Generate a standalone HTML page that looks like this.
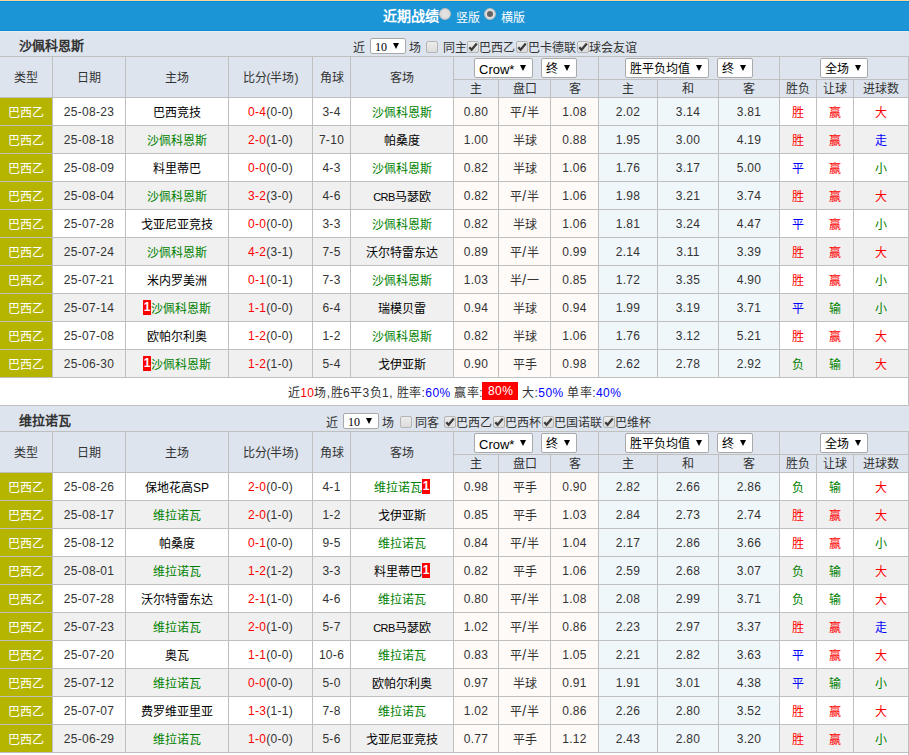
<!DOCTYPE html>
<html lang="zh-CN"><head><meta charset="utf-8"><style>
html,body{margin:0;padding:0}
body{width:909px;height:755px;overflow:hidden;position:relative;background:#fff;font-family:"Liberation Sans",sans-serif;font-size:12px;color:#333}
.a{position:absolute}
.sl{font-size:14px;margin:0 0.5px 0 0;position:relative;top:0}
.t{position:absolute;text-align:center;white-space:nowrap;overflow:visible}
.s{position:absolute;white-space:nowrap}
.bd{display:inline-block;background:#f00;color:#fff;font-weight:bold;width:8px;height:15px;line-height:15px;font-size:12px;text-align:center;vertical-align:middle;position:relative;top:-2px}
.cb{position:absolute;width:10px;height:10px;border:1px solid #b4b4b4;border-radius:2px;background:linear-gradient(#ececec,#dcdcdc)}
.cb svg{position:absolute;left:-1px;top:-1px}
.sel{position:absolute;height:20px;border:1px solid #a9a9a9;border-radius:2px;background:#fff;box-sizing:border-box;white-space:nowrap;color:#000;font-size:13px;line-height:19px}
.sel span{position:absolute;left:4px;top:1px;font-size:12px}
.sel i{position:absolute;right:6px;top:6px;width:0;height:0;border-left:3px solid transparent;border-right:3px solid transparent;border-top:6px solid #000}
.sel10{position:absolute;width:36px;height:16px;border:1px solid #a9a9a9;border-radius:2px;background:#fff;box-sizing:border-box;white-space:nowrap;color:#000}
.sel10 span{position:absolute;left:4px;top:1px;font-family:"Liberation Serif",serif;font-size:12px;line-height:15px}
.sel10 i{position:absolute;right:6px;top:4px;width:0;height:0;border-left:3px solid transparent;border-right:3px solid transparent;border-top:6px solid #000}
.red80{display:inline-block;background:#f00;color:#fff;padding:0 5px 0 6px;line-height:18px;height:18px;margin-left:-1px;position:relative;top:-2px}
.rad{position:absolute;width:10px;height:10px;border-radius:50%;border:1px solid #bdbdbd;background:radial-gradient(#e6e6e6,#d6d6d6)}
.rad.on::after{content:"";position:absolute;left:2px;top:2px;width:6px;height:6px;border-radius:50%;background:#646464}
</style></head><body>
<div class="a" style="left:0;top:0;width:909px;height:1px;background:#ffd699"></div>
<div class="a" style="left:0;top:1px;width:909px;height:29px;background:#1b95d6"></div>
<div class="a" style="left:0;top:1px;width:909px;height:1px;background:#0a8ed6"></div>
<div class="a" style="left:0px;top:31px;width:909px;height:25px;background:#dde4ee"></div>
<div class="a" style="left:0px;top:30px;width:909px;height:1px;background:#0a8dd5"></div>
<div class="a" style="left:0px;top:31px;width:909px;height:1px;background:#e8ebf0"></div>
<div class="s" style="left:19px;top:36px;font-weight:bold;font-size:13px;color:#333;line-height:20px">沙佩科恩斯</div>
<div class="s" style="left:353px;top:40px;line-height:16px">近</div>
<div class="sel10" style="left:370px;top:38px"><span>10</span><i></i></div>
<div class="s" style="left:409px;top:40px;line-height:16px">场</div>
<div class="cb" style="left:426px;top:41px"></div>
<div class="s" style="left:442.5px;top:40px;line-height:16px">同主</div>
<div class="cb" style="left:467px;top:41px"><svg width="12" height="12" viewBox="0 0 12 12"><path d="M2.3 6.2 L4.6 8.8 L9.8 2.6" stroke="#3c3c3c" stroke-width="2.3" fill="none"/></svg></div>
<div class="s" style="left:478.5px;top:40px;line-height:16px">巴西乙</div>
<div class="cb" style="left:516.0px;top:41px"><svg width="12" height="12" viewBox="0 0 12 12"><path d="M2.3 6.2 L4.6 8.8 L9.8 2.6" stroke="#3c3c3c" stroke-width="2.3" fill="none"/></svg></div>
<div class="s" style="left:527.5px;top:40px;line-height:16px">巴卡德联</div>
<div class="cb" style="left:577.0px;top:41px"><svg width="12" height="12" viewBox="0 0 12 12"><path d="M2.3 6.2 L4.6 8.8 L9.8 2.6" stroke="#3c3c3c" stroke-width="2.3" fill="none"/></svg></div>
<div class="s" style="left:588.5px;top:40px;line-height:16px">球会友谊</div>
<div class="a" style="left:0px;top:57px;width:909px;height:40px;background:#dde4ee"></div>
<div class="t" style="left:0px;top:58px;width:52px;height:40px;line-height:40px;color:#333">类型</div>
<div class="t" style="left:53px;top:58px;width:72px;height:40px;line-height:40px;color:#333">日期</div>
<div class="t" style="left:126px;top:58px;width:102px;height:40px;line-height:40px;color:#333">主场</div>
<div class="t" style="left:229px;top:58px;width:83px;height:40px;line-height:40px;color:#333">比分(半场)</div>
<div class="t" style="left:313px;top:58px;width:37px;height:40px;line-height:40px;color:#333">角球</div>
<div class="t" style="left:351px;top:58px;width:102px;height:40px;line-height:40px;color:#333">客场</div>
<div class="sel" style="left:474px;top:58px;width:59px;"><span><span style="font-size:13px;position:static">Crow*</span></span><i></i></div>
<div class="sel" style="left:541px;top:58px;width:36px;"><span>终</span><i></i></div>
<div class="sel" style="left:625px;top:58px;width:84px;"><span>胜平负均值</span><i></i></div>
<div class="sel" style="left:717px;top:58px;width:36px;"><span>终</span><i></i></div>
<div class="sel" style="left:820px;top:58px;width:48px;"><span>全场</span><i></i></div>
<div class="t" style="left:454px;top:81px;width:44px;height:17px;line-height:17px;color:#333">主</div>
<div class="t" style="left:499px;top:81px;width:51px;height:17px;line-height:17px;color:#333">盘口</div>
<div class="t" style="left:551px;top:81px;width:47px;height:17px;line-height:17px;color:#333">客</div>
<div class="t" style="left:599px;top:81px;width:58px;height:17px;line-height:17px;color:#333">主</div>
<div class="t" style="left:658px;top:81px;width:60px;height:17px;line-height:17px;color:#333">和</div>
<div class="t" style="left:719px;top:81px;width:60px;height:17px;line-height:17px;color:#333">客</div>
<div class="t" style="left:780px;top:81px;width:36px;height:17px;line-height:17px;color:#333">胜负</div>
<div class="t" style="left:817px;top:81px;width:36px;height:17px;line-height:17px;color:#333">让球</div>
<div class="t" style="left:854px;top:81px;width:54px;height:17px;line-height:17px;color:#333">进球数</div>
<div class="a" style="left:0px;top:98px;width:909px;height:27px;background:#fff"></div>
<div class="a" style="left:0px;top:98px;width:52px;height:27px;background:#b5b500"></div>
<div class="a" style="left:454px;top:98px;width:44px;height:27px;background:#fefaf7"></div>
<div class="a" style="left:499px;top:98px;width:51px;height:27px;background:#fefaf7"></div>
<div class="a" style="left:551px;top:98px;width:47px;height:27px;background:#fefaf7"></div>
<div class="a" style="left:599px;top:98px;width:58px;height:27px;background:#f0f7fb"></div>
<div class="a" style="left:658px;top:98px;width:60px;height:27px;background:#f0f7fb"></div>
<div class="a" style="left:719px;top:98px;width:60px;height:27px;background:#f0f7fb"></div>
<div class="t" style="left:0px;top:100px;width:52px;height:27px;line-height:27px;color:#fff">巴西乙</div>
<div class="t" style="left:53px;top:99px;width:72px;height:27px;line-height:27px;color:#333;letter-spacing:.3px">25-08-23</div>
<div class="t" style="left:126px;top:100px;width:102px;height:27px;line-height:27px;"><span style="color:#000">巴西竞技</span></div>
<div class="t" style="left:229px;top:99px;width:83px;height:27px;line-height:27px;color:#333;letter-spacing:.3px"><span style="color:#ff0000">0-4</span>(0-0)</div>
<div class="t" style="left:313px;top:99px;width:37px;height:27px;line-height:27px;color:#333;letter-spacing:.3px">3-4</div>
<div class="t" style="left:351px;top:100px;width:102px;height:27px;line-height:27px;"><span style="color:#008000">沙佩科恩斯</span></div>
<div class="t" style="left:454px;top:99px;width:44px;height:27px;line-height:27px;color:#333;letter-spacing:.3px">0.80</div>
<div class="t" style="left:499px;top:99px;width:51px;height:27px;line-height:27px;color:#333">平<span class="sl">/</span>半</div>
<div class="t" style="left:551px;top:99px;width:47px;height:27px;line-height:27px;color:#333;letter-spacing:.3px">1.08</div>
<div class="t" style="left:599px;top:99px;width:58px;height:27px;line-height:27px;color:#333;letter-spacing:.3px">2.02</div>
<div class="t" style="left:658px;top:99px;width:60px;height:27px;line-height:27px;color:#333;letter-spacing:.3px">3.14</div>
<div class="t" style="left:719px;top:99px;width:60px;height:27px;line-height:27px;color:#333;letter-spacing:.3px">3.81</div>
<div class="t" style="left:780px;top:100px;width:36px;height:27px;line-height:27px;color:#ff0000">胜</div>
<div class="t" style="left:817px;top:100px;width:36px;height:27px;line-height:27px;color:#ff0000">赢</div>
<div class="t" style="left:854px;top:100px;width:54px;height:27px;line-height:27px;color:#ff0000">大</div>
<div class="a" style="left:0px;top:126px;width:909px;height:27px;background:#f0f0f0"></div>
<div class="a" style="left:0px;top:126px;width:52px;height:27px;background:#b5b500"></div>
<div class="a" style="left:454px;top:126px;width:44px;height:27px;background:#fefaf7"></div>
<div class="a" style="left:499px;top:126px;width:51px;height:27px;background:#fefaf7"></div>
<div class="a" style="left:551px;top:126px;width:47px;height:27px;background:#fefaf7"></div>
<div class="a" style="left:599px;top:126px;width:58px;height:27px;background:#f0f7fb"></div>
<div class="a" style="left:658px;top:126px;width:60px;height:27px;background:#f0f7fb"></div>
<div class="a" style="left:719px;top:126px;width:60px;height:27px;background:#f0f7fb"></div>
<div class="t" style="left:0px;top:128px;width:52px;height:27px;line-height:27px;color:#fff">巴西乙</div>
<div class="t" style="left:53px;top:127px;width:72px;height:27px;line-height:27px;color:#333;letter-spacing:.3px">25-08-18</div>
<div class="t" style="left:126px;top:128px;width:102px;height:27px;line-height:27px;"><span style="color:#008000">沙佩科恩斯</span></div>
<div class="t" style="left:229px;top:127px;width:83px;height:27px;line-height:27px;color:#333;letter-spacing:.3px"><span style="color:#ff0000">2-0</span>(1-0)</div>
<div class="t" style="left:313px;top:127px;width:37px;height:27px;line-height:27px;color:#333;letter-spacing:.3px">7-10</div>
<div class="t" style="left:351px;top:128px;width:102px;height:27px;line-height:27px;"><span style="color:#000">帕桑度</span></div>
<div class="t" style="left:454px;top:127px;width:44px;height:27px;line-height:27px;color:#333;letter-spacing:.3px">1.00</div>
<div class="t" style="left:499px;top:128px;width:51px;height:27px;line-height:27px;color:#333">半球</div>
<div class="t" style="left:551px;top:127px;width:47px;height:27px;line-height:27px;color:#333;letter-spacing:.3px">0.88</div>
<div class="t" style="left:599px;top:127px;width:58px;height:27px;line-height:27px;color:#333;letter-spacing:.3px">1.95</div>
<div class="t" style="left:658px;top:127px;width:60px;height:27px;line-height:27px;color:#333;letter-spacing:.3px">3.00</div>
<div class="t" style="left:719px;top:127px;width:60px;height:27px;line-height:27px;color:#333;letter-spacing:.3px">4.19</div>
<div class="t" style="left:780px;top:128px;width:36px;height:27px;line-height:27px;color:#ff0000">胜</div>
<div class="t" style="left:817px;top:128px;width:36px;height:27px;line-height:27px;color:#ff0000">赢</div>
<div class="t" style="left:854px;top:128px;width:54px;height:27px;line-height:27px;color:#0000ff">走</div>
<div class="a" style="left:0px;top:154px;width:909px;height:27px;background:#fff"></div>
<div class="a" style="left:0px;top:154px;width:52px;height:27px;background:#b5b500"></div>
<div class="a" style="left:454px;top:154px;width:44px;height:27px;background:#fefaf7"></div>
<div class="a" style="left:499px;top:154px;width:51px;height:27px;background:#fefaf7"></div>
<div class="a" style="left:551px;top:154px;width:47px;height:27px;background:#fefaf7"></div>
<div class="a" style="left:599px;top:154px;width:58px;height:27px;background:#f0f7fb"></div>
<div class="a" style="left:658px;top:154px;width:60px;height:27px;background:#f0f7fb"></div>
<div class="a" style="left:719px;top:154px;width:60px;height:27px;background:#f0f7fb"></div>
<div class="t" style="left:0px;top:156px;width:52px;height:27px;line-height:27px;color:#fff">巴西乙</div>
<div class="t" style="left:53px;top:155px;width:72px;height:27px;line-height:27px;color:#333;letter-spacing:.3px">25-08-09</div>
<div class="t" style="left:126px;top:156px;width:102px;height:27px;line-height:27px;"><span style="color:#000">料里蒂巴</span></div>
<div class="t" style="left:229px;top:155px;width:83px;height:27px;line-height:27px;color:#333;letter-spacing:.3px"><span style="color:#ff0000">0-0</span>(0-0)</div>
<div class="t" style="left:313px;top:155px;width:37px;height:27px;line-height:27px;color:#333;letter-spacing:.3px">4-3</div>
<div class="t" style="left:351px;top:156px;width:102px;height:27px;line-height:27px;"><span style="color:#008000">沙佩科恩斯</span></div>
<div class="t" style="left:454px;top:155px;width:44px;height:27px;line-height:27px;color:#333;letter-spacing:.3px">0.82</div>
<div class="t" style="left:499px;top:156px;width:51px;height:27px;line-height:27px;color:#333">半球</div>
<div class="t" style="left:551px;top:155px;width:47px;height:27px;line-height:27px;color:#333;letter-spacing:.3px">1.06</div>
<div class="t" style="left:599px;top:155px;width:58px;height:27px;line-height:27px;color:#333;letter-spacing:.3px">1.76</div>
<div class="t" style="left:658px;top:155px;width:60px;height:27px;line-height:27px;color:#333;letter-spacing:.3px">3.17</div>
<div class="t" style="left:719px;top:155px;width:60px;height:27px;line-height:27px;color:#333;letter-spacing:.3px">5.00</div>
<div class="t" style="left:780px;top:156px;width:36px;height:27px;line-height:27px;color:#0000ff">平</div>
<div class="t" style="left:817px;top:156px;width:36px;height:27px;line-height:27px;color:#ff0000">赢</div>
<div class="t" style="left:854px;top:156px;width:54px;height:27px;line-height:27px;color:#008000">小</div>
<div class="a" style="left:0px;top:182px;width:909px;height:27px;background:#f0f0f0"></div>
<div class="a" style="left:0px;top:182px;width:52px;height:27px;background:#b5b500"></div>
<div class="a" style="left:454px;top:182px;width:44px;height:27px;background:#fefaf7"></div>
<div class="a" style="left:499px;top:182px;width:51px;height:27px;background:#fefaf7"></div>
<div class="a" style="left:551px;top:182px;width:47px;height:27px;background:#fefaf7"></div>
<div class="a" style="left:599px;top:182px;width:58px;height:27px;background:#f0f7fb"></div>
<div class="a" style="left:658px;top:182px;width:60px;height:27px;background:#f0f7fb"></div>
<div class="a" style="left:719px;top:182px;width:60px;height:27px;background:#f0f7fb"></div>
<div class="t" style="left:0px;top:184px;width:52px;height:27px;line-height:27px;color:#fff">巴西乙</div>
<div class="t" style="left:53px;top:183px;width:72px;height:27px;line-height:27px;color:#333;letter-spacing:.3px">25-08-04</div>
<div class="t" style="left:126px;top:184px;width:102px;height:27px;line-height:27px;"><span style="color:#008000">沙佩科恩斯</span></div>
<div class="t" style="left:229px;top:183px;width:83px;height:27px;line-height:27px;color:#333;letter-spacing:.3px"><span style="color:#ff0000">3-2</span>(3-0)</div>
<div class="t" style="left:313px;top:183px;width:37px;height:27px;line-height:27px;color:#333;letter-spacing:.3px">4-6</div>
<div class="t" style="left:351px;top:184px;width:102px;height:27px;line-height:27px;"><span style="color:#000"><span style="font-size:11px;letter-spacing:-0.5px">CRB</span>马瑟欧</span></div>
<div class="t" style="left:454px;top:183px;width:44px;height:27px;line-height:27px;color:#333;letter-spacing:.3px">0.82</div>
<div class="t" style="left:499px;top:183px;width:51px;height:27px;line-height:27px;color:#333">平<span class="sl">/</span>半</div>
<div class="t" style="left:551px;top:183px;width:47px;height:27px;line-height:27px;color:#333;letter-spacing:.3px">1.06</div>
<div class="t" style="left:599px;top:183px;width:58px;height:27px;line-height:27px;color:#333;letter-spacing:.3px">1.98</div>
<div class="t" style="left:658px;top:183px;width:60px;height:27px;line-height:27px;color:#333;letter-spacing:.3px">3.21</div>
<div class="t" style="left:719px;top:183px;width:60px;height:27px;line-height:27px;color:#333;letter-spacing:.3px">3.74</div>
<div class="t" style="left:780px;top:184px;width:36px;height:27px;line-height:27px;color:#ff0000">胜</div>
<div class="t" style="left:817px;top:184px;width:36px;height:27px;line-height:27px;color:#ff0000">赢</div>
<div class="t" style="left:854px;top:184px;width:54px;height:27px;line-height:27px;color:#ff0000">大</div>
<div class="a" style="left:0px;top:210px;width:909px;height:27px;background:#fff"></div>
<div class="a" style="left:0px;top:210px;width:52px;height:27px;background:#b5b500"></div>
<div class="a" style="left:454px;top:210px;width:44px;height:27px;background:#fefaf7"></div>
<div class="a" style="left:499px;top:210px;width:51px;height:27px;background:#fefaf7"></div>
<div class="a" style="left:551px;top:210px;width:47px;height:27px;background:#fefaf7"></div>
<div class="a" style="left:599px;top:210px;width:58px;height:27px;background:#f0f7fb"></div>
<div class="a" style="left:658px;top:210px;width:60px;height:27px;background:#f0f7fb"></div>
<div class="a" style="left:719px;top:210px;width:60px;height:27px;background:#f0f7fb"></div>
<div class="t" style="left:0px;top:212px;width:52px;height:27px;line-height:27px;color:#fff">巴西乙</div>
<div class="t" style="left:53px;top:211px;width:72px;height:27px;line-height:27px;color:#333;letter-spacing:.3px">25-07-28</div>
<div class="t" style="left:126px;top:212px;width:102px;height:27px;line-height:27px;"><span style="color:#000">戈亚尼亚竞技</span></div>
<div class="t" style="left:229px;top:211px;width:83px;height:27px;line-height:27px;color:#333;letter-spacing:.3px"><span style="color:#ff0000">0-0</span>(0-0)</div>
<div class="t" style="left:313px;top:211px;width:37px;height:27px;line-height:27px;color:#333;letter-spacing:.3px">3-3</div>
<div class="t" style="left:351px;top:212px;width:102px;height:27px;line-height:27px;"><span style="color:#008000">沙佩科恩斯</span></div>
<div class="t" style="left:454px;top:211px;width:44px;height:27px;line-height:27px;color:#333;letter-spacing:.3px">0.82</div>
<div class="t" style="left:499px;top:212px;width:51px;height:27px;line-height:27px;color:#333">半球</div>
<div class="t" style="left:551px;top:211px;width:47px;height:27px;line-height:27px;color:#333;letter-spacing:.3px">1.06</div>
<div class="t" style="left:599px;top:211px;width:58px;height:27px;line-height:27px;color:#333;letter-spacing:.3px">1.81</div>
<div class="t" style="left:658px;top:211px;width:60px;height:27px;line-height:27px;color:#333;letter-spacing:.3px">3.24</div>
<div class="t" style="left:719px;top:211px;width:60px;height:27px;line-height:27px;color:#333;letter-spacing:.3px">4.47</div>
<div class="t" style="left:780px;top:212px;width:36px;height:27px;line-height:27px;color:#0000ff">平</div>
<div class="t" style="left:817px;top:212px;width:36px;height:27px;line-height:27px;color:#ff0000">赢</div>
<div class="t" style="left:854px;top:212px;width:54px;height:27px;line-height:27px;color:#008000">小</div>
<div class="a" style="left:0px;top:238px;width:909px;height:27px;background:#f0f0f0"></div>
<div class="a" style="left:0px;top:238px;width:52px;height:27px;background:#b5b500"></div>
<div class="a" style="left:454px;top:238px;width:44px;height:27px;background:#fefaf7"></div>
<div class="a" style="left:499px;top:238px;width:51px;height:27px;background:#fefaf7"></div>
<div class="a" style="left:551px;top:238px;width:47px;height:27px;background:#fefaf7"></div>
<div class="a" style="left:599px;top:238px;width:58px;height:27px;background:#f0f7fb"></div>
<div class="a" style="left:658px;top:238px;width:60px;height:27px;background:#f0f7fb"></div>
<div class="a" style="left:719px;top:238px;width:60px;height:27px;background:#f0f7fb"></div>
<div class="t" style="left:0px;top:240px;width:52px;height:27px;line-height:27px;color:#fff">巴西乙</div>
<div class="t" style="left:53px;top:239px;width:72px;height:27px;line-height:27px;color:#333;letter-spacing:.3px">25-07-24</div>
<div class="t" style="left:126px;top:240px;width:102px;height:27px;line-height:27px;"><span style="color:#008000">沙佩科恩斯</span></div>
<div class="t" style="left:229px;top:239px;width:83px;height:27px;line-height:27px;color:#333;letter-spacing:.3px"><span style="color:#ff0000">4-2</span>(3-1)</div>
<div class="t" style="left:313px;top:239px;width:37px;height:27px;line-height:27px;color:#333;letter-spacing:.3px">7-5</div>
<div class="t" style="left:351px;top:240px;width:102px;height:27px;line-height:27px;"><span style="color:#000">沃尔特雷东达</span></div>
<div class="t" style="left:454px;top:239px;width:44px;height:27px;line-height:27px;color:#333;letter-spacing:.3px">0.89</div>
<div class="t" style="left:499px;top:239px;width:51px;height:27px;line-height:27px;color:#333">平<span class="sl">/</span>半</div>
<div class="t" style="left:551px;top:239px;width:47px;height:27px;line-height:27px;color:#333;letter-spacing:.3px">0.99</div>
<div class="t" style="left:599px;top:239px;width:58px;height:27px;line-height:27px;color:#333;letter-spacing:.3px">2.14</div>
<div class="t" style="left:658px;top:239px;width:60px;height:27px;line-height:27px;color:#333;letter-spacing:.3px">3.11</div>
<div class="t" style="left:719px;top:239px;width:60px;height:27px;line-height:27px;color:#333;letter-spacing:.3px">3.39</div>
<div class="t" style="left:780px;top:240px;width:36px;height:27px;line-height:27px;color:#ff0000">胜</div>
<div class="t" style="left:817px;top:240px;width:36px;height:27px;line-height:27px;color:#ff0000">赢</div>
<div class="t" style="left:854px;top:240px;width:54px;height:27px;line-height:27px;color:#ff0000">大</div>
<div class="a" style="left:0px;top:266px;width:909px;height:27px;background:#fff"></div>
<div class="a" style="left:0px;top:266px;width:52px;height:27px;background:#b5b500"></div>
<div class="a" style="left:454px;top:266px;width:44px;height:27px;background:#fefaf7"></div>
<div class="a" style="left:499px;top:266px;width:51px;height:27px;background:#fefaf7"></div>
<div class="a" style="left:551px;top:266px;width:47px;height:27px;background:#fefaf7"></div>
<div class="a" style="left:599px;top:266px;width:58px;height:27px;background:#f0f7fb"></div>
<div class="a" style="left:658px;top:266px;width:60px;height:27px;background:#f0f7fb"></div>
<div class="a" style="left:719px;top:266px;width:60px;height:27px;background:#f0f7fb"></div>
<div class="t" style="left:0px;top:268px;width:52px;height:27px;line-height:27px;color:#fff">巴西乙</div>
<div class="t" style="left:53px;top:267px;width:72px;height:27px;line-height:27px;color:#333;letter-spacing:.3px">25-07-21</div>
<div class="t" style="left:126px;top:268px;width:102px;height:27px;line-height:27px;"><span style="color:#000">米内罗美洲</span></div>
<div class="t" style="left:229px;top:267px;width:83px;height:27px;line-height:27px;color:#333;letter-spacing:.3px"><span style="color:#ff0000">0-1</span>(0-1)</div>
<div class="t" style="left:313px;top:267px;width:37px;height:27px;line-height:27px;color:#333;letter-spacing:.3px">7-3</div>
<div class="t" style="left:351px;top:268px;width:102px;height:27px;line-height:27px;"><span style="color:#008000">沙佩科恩斯</span></div>
<div class="t" style="left:454px;top:267px;width:44px;height:27px;line-height:27px;color:#333;letter-spacing:.3px">1.03</div>
<div class="t" style="left:499px;top:267px;width:51px;height:27px;line-height:27px;color:#333">半<span class="sl">/</span>一</div>
<div class="t" style="left:551px;top:267px;width:47px;height:27px;line-height:27px;color:#333;letter-spacing:.3px">0.85</div>
<div class="t" style="left:599px;top:267px;width:58px;height:27px;line-height:27px;color:#333;letter-spacing:.3px">1.72</div>
<div class="t" style="left:658px;top:267px;width:60px;height:27px;line-height:27px;color:#333;letter-spacing:.3px">3.35</div>
<div class="t" style="left:719px;top:267px;width:60px;height:27px;line-height:27px;color:#333;letter-spacing:.3px">4.90</div>
<div class="t" style="left:780px;top:268px;width:36px;height:27px;line-height:27px;color:#ff0000">胜</div>
<div class="t" style="left:817px;top:268px;width:36px;height:27px;line-height:27px;color:#ff0000">赢</div>
<div class="t" style="left:854px;top:268px;width:54px;height:27px;line-height:27px;color:#008000">小</div>
<div class="a" style="left:0px;top:294px;width:909px;height:27px;background:#f0f0f0"></div>
<div class="a" style="left:0px;top:294px;width:52px;height:27px;background:#b5b500"></div>
<div class="a" style="left:454px;top:294px;width:44px;height:27px;background:#fefaf7"></div>
<div class="a" style="left:499px;top:294px;width:51px;height:27px;background:#fefaf7"></div>
<div class="a" style="left:551px;top:294px;width:47px;height:27px;background:#fefaf7"></div>
<div class="a" style="left:599px;top:294px;width:58px;height:27px;background:#f0f7fb"></div>
<div class="a" style="left:658px;top:294px;width:60px;height:27px;background:#f0f7fb"></div>
<div class="a" style="left:719px;top:294px;width:60px;height:27px;background:#f0f7fb"></div>
<div class="t" style="left:0px;top:296px;width:52px;height:27px;line-height:27px;color:#fff">巴西乙</div>
<div class="t" style="left:53px;top:295px;width:72px;height:27px;line-height:27px;color:#333;letter-spacing:.3px">25-07-14</div>
<div class="t" style="left:126px;top:296px;width:102px;height:27px;line-height:27px;"><b class="bd">1</b><span style="color:#008000">沙佩科恩斯</span></div>
<div class="t" style="left:229px;top:295px;width:83px;height:27px;line-height:27px;color:#333;letter-spacing:.3px"><span style="color:#ff0000">1-1</span>(0-0)</div>
<div class="t" style="left:313px;top:295px;width:37px;height:27px;line-height:27px;color:#333;letter-spacing:.3px">6-4</div>
<div class="t" style="left:351px;top:296px;width:102px;height:27px;line-height:27px;"><span style="color:#000">瑞模贝雷</span></div>
<div class="t" style="left:454px;top:295px;width:44px;height:27px;line-height:27px;color:#333;letter-spacing:.3px">0.94</div>
<div class="t" style="left:499px;top:296px;width:51px;height:27px;line-height:27px;color:#333">半球</div>
<div class="t" style="left:551px;top:295px;width:47px;height:27px;line-height:27px;color:#333;letter-spacing:.3px">0.94</div>
<div class="t" style="left:599px;top:295px;width:58px;height:27px;line-height:27px;color:#333;letter-spacing:.3px">1.99</div>
<div class="t" style="left:658px;top:295px;width:60px;height:27px;line-height:27px;color:#333;letter-spacing:.3px">3.19</div>
<div class="t" style="left:719px;top:295px;width:60px;height:27px;line-height:27px;color:#333;letter-spacing:.3px">3.71</div>
<div class="t" style="left:780px;top:296px;width:36px;height:27px;line-height:27px;color:#0000ff">平</div>
<div class="t" style="left:817px;top:296px;width:36px;height:27px;line-height:27px;color:#008000">输</div>
<div class="t" style="left:854px;top:296px;width:54px;height:27px;line-height:27px;color:#008000">小</div>
<div class="a" style="left:0px;top:322px;width:909px;height:27px;background:#fff"></div>
<div class="a" style="left:0px;top:322px;width:52px;height:27px;background:#b5b500"></div>
<div class="a" style="left:454px;top:322px;width:44px;height:27px;background:#fefaf7"></div>
<div class="a" style="left:499px;top:322px;width:51px;height:27px;background:#fefaf7"></div>
<div class="a" style="left:551px;top:322px;width:47px;height:27px;background:#fefaf7"></div>
<div class="a" style="left:599px;top:322px;width:58px;height:27px;background:#f0f7fb"></div>
<div class="a" style="left:658px;top:322px;width:60px;height:27px;background:#f0f7fb"></div>
<div class="a" style="left:719px;top:322px;width:60px;height:27px;background:#f0f7fb"></div>
<div class="t" style="left:0px;top:324px;width:52px;height:27px;line-height:27px;color:#fff">巴西乙</div>
<div class="t" style="left:53px;top:323px;width:72px;height:27px;line-height:27px;color:#333;letter-spacing:.3px">25-07-08</div>
<div class="t" style="left:126px;top:324px;width:102px;height:27px;line-height:27px;"><span style="color:#000">欧帕尔利奥</span></div>
<div class="t" style="left:229px;top:323px;width:83px;height:27px;line-height:27px;color:#333;letter-spacing:.3px"><span style="color:#ff0000">1-2</span>(0-0)</div>
<div class="t" style="left:313px;top:323px;width:37px;height:27px;line-height:27px;color:#333;letter-spacing:.3px">1-2</div>
<div class="t" style="left:351px;top:324px;width:102px;height:27px;line-height:27px;"><span style="color:#008000">沙佩科恩斯</span></div>
<div class="t" style="left:454px;top:323px;width:44px;height:27px;line-height:27px;color:#333;letter-spacing:.3px">0.82</div>
<div class="t" style="left:499px;top:324px;width:51px;height:27px;line-height:27px;color:#333">半球</div>
<div class="t" style="left:551px;top:323px;width:47px;height:27px;line-height:27px;color:#333;letter-spacing:.3px">1.06</div>
<div class="t" style="left:599px;top:323px;width:58px;height:27px;line-height:27px;color:#333;letter-spacing:.3px">1.76</div>
<div class="t" style="left:658px;top:323px;width:60px;height:27px;line-height:27px;color:#333;letter-spacing:.3px">3.12</div>
<div class="t" style="left:719px;top:323px;width:60px;height:27px;line-height:27px;color:#333;letter-spacing:.3px">5.21</div>
<div class="t" style="left:780px;top:324px;width:36px;height:27px;line-height:27px;color:#ff0000">胜</div>
<div class="t" style="left:817px;top:324px;width:36px;height:27px;line-height:27px;color:#ff0000">赢</div>
<div class="t" style="left:854px;top:324px;width:54px;height:27px;line-height:27px;color:#ff0000">大</div>
<div class="a" style="left:0px;top:350px;width:909px;height:27px;background:#f0f0f0"></div>
<div class="a" style="left:0px;top:350px;width:52px;height:27px;background:#b5b500"></div>
<div class="a" style="left:454px;top:350px;width:44px;height:27px;background:#fefaf7"></div>
<div class="a" style="left:499px;top:350px;width:51px;height:27px;background:#fefaf7"></div>
<div class="a" style="left:551px;top:350px;width:47px;height:27px;background:#fefaf7"></div>
<div class="a" style="left:599px;top:350px;width:58px;height:27px;background:#f0f7fb"></div>
<div class="a" style="left:658px;top:350px;width:60px;height:27px;background:#f0f7fb"></div>
<div class="a" style="left:719px;top:350px;width:60px;height:27px;background:#f0f7fb"></div>
<div class="t" style="left:0px;top:352px;width:52px;height:27px;line-height:27px;color:#fff">巴西乙</div>
<div class="t" style="left:53px;top:351px;width:72px;height:27px;line-height:27px;color:#333;letter-spacing:.3px">25-06-30</div>
<div class="t" style="left:126px;top:352px;width:102px;height:27px;line-height:27px;"><b class="bd">1</b><span style="color:#008000">沙佩科恩斯</span></div>
<div class="t" style="left:229px;top:351px;width:83px;height:27px;line-height:27px;color:#333;letter-spacing:.3px"><span style="color:#ff0000">1-2</span>(1-0)</div>
<div class="t" style="left:313px;top:351px;width:37px;height:27px;line-height:27px;color:#333;letter-spacing:.3px">5-4</div>
<div class="t" style="left:351px;top:352px;width:102px;height:27px;line-height:27px;"><span style="color:#000">戈伊亚斯</span></div>
<div class="t" style="left:454px;top:351px;width:44px;height:27px;line-height:27px;color:#333;letter-spacing:.3px">0.90</div>
<div class="t" style="left:499px;top:352px;width:51px;height:27px;line-height:27px;color:#333">平手</div>
<div class="t" style="left:551px;top:351px;width:47px;height:27px;line-height:27px;color:#333;letter-spacing:.3px">0.98</div>
<div class="t" style="left:599px;top:351px;width:58px;height:27px;line-height:27px;color:#333;letter-spacing:.3px">2.62</div>
<div class="t" style="left:658px;top:351px;width:60px;height:27px;line-height:27px;color:#333;letter-spacing:.3px">2.78</div>
<div class="t" style="left:719px;top:351px;width:60px;height:27px;line-height:27px;color:#333;letter-spacing:.3px">2.92</div>
<div class="t" style="left:780px;top:352px;width:36px;height:27px;line-height:27px;color:#008000">负</div>
<div class="t" style="left:817px;top:352px;width:36px;height:27px;line-height:27px;color:#008000">输</div>
<div class="t" style="left:854px;top:352px;width:54px;height:27px;line-height:27px;color:#ff0000">大</div>
<div class="a" style="left:0px;top:56px;width:909px;height:1px;background:#bfbfbf"></div>
<div class="a" style="left:453px;top:79px;width:456px;height:1px;background:#bfbfbf"></div>
<div class="a" style="left:0px;top:97px;width:909px;height:1px;background:#bfbfbf"></div>
<div class="a" style="left:0px;top:125px;width:909px;height:1px;background:#bfbfbf"></div>
<div class="a" style="left:0px;top:153px;width:909px;height:1px;background:#bfbfbf"></div>
<div class="a" style="left:0px;top:181px;width:909px;height:1px;background:#bfbfbf"></div>
<div class="a" style="left:0px;top:209px;width:909px;height:1px;background:#bfbfbf"></div>
<div class="a" style="left:0px;top:237px;width:909px;height:1px;background:#bfbfbf"></div>
<div class="a" style="left:0px;top:265px;width:909px;height:1px;background:#bfbfbf"></div>
<div class="a" style="left:0px;top:293px;width:909px;height:1px;background:#bfbfbf"></div>
<div class="a" style="left:0px;top:321px;width:909px;height:1px;background:#bfbfbf"></div>
<div class="a" style="left:0px;top:349px;width:909px;height:1px;background:#bfbfbf"></div>
<div class="a" style="left:0px;top:377px;width:909px;height:1px;background:#bfbfbf"></div>
<div class="a" style="left:52px;top:57px;width:1px;height:320px;background:#bfbfbf"></div>
<div class="a" style="left:125px;top:57px;width:1px;height:320px;background:#bfbfbf"></div>
<div class="a" style="left:228px;top:57px;width:1px;height:320px;background:#bfbfbf"></div>
<div class="a" style="left:312px;top:57px;width:1px;height:320px;background:#bfbfbf"></div>
<div class="a" style="left:350px;top:57px;width:1px;height:320px;background:#bfbfbf"></div>
<div class="a" style="left:453px;top:57px;width:1px;height:320px;background:#bfbfbf"></div>
<div class="a" style="left:498px;top:80px;width:1px;height:297px;background:#bfbfbf"></div>
<div class="a" style="left:550px;top:80px;width:1px;height:297px;background:#bfbfbf"></div>
<div class="a" style="left:598px;top:57px;width:1px;height:320px;background:#bfbfbf"></div>
<div class="a" style="left:657px;top:80px;width:1px;height:297px;background:#bfbfbf"></div>
<div class="a" style="left:718px;top:80px;width:1px;height:297px;background:#bfbfbf"></div>
<div class="a" style="left:779px;top:57px;width:1px;height:320px;background:#bfbfbf"></div>
<div class="a" style="left:816px;top:80px;width:1px;height:297px;background:#bfbfbf"></div>
<div class="a" style="left:853px;top:80px;width:1px;height:297px;background:#bfbfbf"></div>
<div class="a" style="left:908px;top:57px;width:1px;height:320px;background:#bfbfbf"></div>
<div class="a" style="left:0px;top:406px;width:909px;height:25px;background:#dde4ee"></div>
<div class="a" style="left:0px;top:405px;width:909px;height:1px;background:#bfbfbf"></div>
<div class="s" style="left:19px;top:411px;font-weight:bold;font-size:13px;color:#333;line-height:20px">维拉诺瓦</div>
<div class="s" style="left:326px;top:415px;line-height:16px">近</div>
<div class="sel10" style="left:343px;top:413px"><span>10</span><i></i></div>
<div class="s" style="left:382px;top:415px;line-height:16px">场</div>
<div class="cb" style="left:400px;top:416px"></div>
<div class="s" style="left:415px;top:415px;line-height:16px">同客</div>
<div class="cb" style="left:444px;top:416px"><svg width="12" height="12" viewBox="0 0 12 12"><path d="M2.3 6.2 L4.6 8.8 L9.8 2.6" stroke="#3c3c3c" stroke-width="2.3" fill="none"/></svg></div>
<div class="s" style="left:455.5px;top:415px;line-height:16px">巴西乙</div>
<div class="cb" style="left:493.0px;top:416px"><svg width="12" height="12" viewBox="0 0 12 12"><path d="M2.3 6.2 L4.6 8.8 L9.8 2.6" stroke="#3c3c3c" stroke-width="2.3" fill="none"/></svg></div>
<div class="s" style="left:504.5px;top:415px;line-height:16px">巴西杯</div>
<div class="cb" style="left:542.0px;top:416px"><svg width="12" height="12" viewBox="0 0 12 12"><path d="M2.3 6.2 L4.6 8.8 L9.8 2.6" stroke="#3c3c3c" stroke-width="2.3" fill="none"/></svg></div>
<div class="s" style="left:553.5px;top:415px;line-height:16px">巴国诺联</div>
<div class="cb" style="left:603.0px;top:416px"><svg width="12" height="12" viewBox="0 0 12 12"><path d="M2.3 6.2 L4.6 8.8 L9.8 2.6" stroke="#3c3c3c" stroke-width="2.3" fill="none"/></svg></div>
<div class="s" style="left:614.5px;top:415px;line-height:16px">巴维杯</div>
<div class="a" style="left:0px;top:432px;width:909px;height:40px;background:#dde4ee"></div>
<div class="t" style="left:0px;top:433px;width:52px;height:40px;line-height:40px;color:#333">类型</div>
<div class="t" style="left:53px;top:433px;width:72px;height:40px;line-height:40px;color:#333">日期</div>
<div class="t" style="left:126px;top:433px;width:102px;height:40px;line-height:40px;color:#333">主场</div>
<div class="t" style="left:229px;top:433px;width:83px;height:40px;line-height:40px;color:#333">比分(半场)</div>
<div class="t" style="left:313px;top:433px;width:37px;height:40px;line-height:40px;color:#333">角球</div>
<div class="t" style="left:351px;top:433px;width:102px;height:40px;line-height:40px;color:#333">客场</div>
<div class="sel" style="left:474px;top:433px;width:59px;"><span><span style="font-size:13px;position:static">Crow*</span></span><i></i></div>
<div class="sel" style="left:541px;top:433px;width:36px;"><span>终</span><i></i></div>
<div class="sel" style="left:625px;top:433px;width:84px;"><span>胜平负均值</span><i></i></div>
<div class="sel" style="left:717px;top:433px;width:36px;"><span>终</span><i></i></div>
<div class="sel" style="left:820px;top:433px;width:48px;"><span>全场</span><i></i></div>
<div class="t" style="left:454px;top:456px;width:44px;height:17px;line-height:17px;color:#333">主</div>
<div class="t" style="left:499px;top:456px;width:51px;height:17px;line-height:17px;color:#333">盘口</div>
<div class="t" style="left:551px;top:456px;width:47px;height:17px;line-height:17px;color:#333">客</div>
<div class="t" style="left:599px;top:456px;width:58px;height:17px;line-height:17px;color:#333">主</div>
<div class="t" style="left:658px;top:456px;width:60px;height:17px;line-height:17px;color:#333">和</div>
<div class="t" style="left:719px;top:456px;width:60px;height:17px;line-height:17px;color:#333">客</div>
<div class="t" style="left:780px;top:456px;width:36px;height:17px;line-height:17px;color:#333">胜负</div>
<div class="t" style="left:817px;top:456px;width:36px;height:17px;line-height:17px;color:#333">让球</div>
<div class="t" style="left:854px;top:456px;width:54px;height:17px;line-height:17px;color:#333">进球数</div>
<div class="a" style="left:0px;top:473px;width:909px;height:27px;background:#fff"></div>
<div class="a" style="left:0px;top:473px;width:52px;height:27px;background:#b5b500"></div>
<div class="a" style="left:454px;top:473px;width:44px;height:27px;background:#fefaf7"></div>
<div class="a" style="left:499px;top:473px;width:51px;height:27px;background:#fefaf7"></div>
<div class="a" style="left:551px;top:473px;width:47px;height:27px;background:#fefaf7"></div>
<div class="a" style="left:599px;top:473px;width:58px;height:27px;background:#f0f7fb"></div>
<div class="a" style="left:658px;top:473px;width:60px;height:27px;background:#f0f7fb"></div>
<div class="a" style="left:719px;top:473px;width:60px;height:27px;background:#f0f7fb"></div>
<div class="t" style="left:0px;top:475px;width:52px;height:27px;line-height:27px;color:#fff">巴西乙</div>
<div class="t" style="left:53px;top:474px;width:72px;height:27px;line-height:27px;color:#333;letter-spacing:.3px">25-08-26</div>
<div class="t" style="left:126px;top:475px;width:102px;height:27px;line-height:27px;"><span style="color:#000">保地花高SP</span></div>
<div class="t" style="left:229px;top:474px;width:83px;height:27px;line-height:27px;color:#333;letter-spacing:.3px"><span style="color:#ff0000">2-0</span>(0-0)</div>
<div class="t" style="left:313px;top:474px;width:37px;height:27px;line-height:27px;color:#333;letter-spacing:.3px">4-1</div>
<div class="t" style="left:351px;top:475px;width:102px;height:27px;line-height:27px;"><span style="color:#008000">维拉诺瓦</span><b class="bd">1</b></div>
<div class="t" style="left:454px;top:474px;width:44px;height:27px;line-height:27px;color:#333;letter-spacing:.3px">0.98</div>
<div class="t" style="left:499px;top:475px;width:51px;height:27px;line-height:27px;color:#333">平手</div>
<div class="t" style="left:551px;top:474px;width:47px;height:27px;line-height:27px;color:#333;letter-spacing:.3px">0.90</div>
<div class="t" style="left:599px;top:474px;width:58px;height:27px;line-height:27px;color:#333;letter-spacing:.3px">2.82</div>
<div class="t" style="left:658px;top:474px;width:60px;height:27px;line-height:27px;color:#333;letter-spacing:.3px">2.66</div>
<div class="t" style="left:719px;top:474px;width:60px;height:27px;line-height:27px;color:#333;letter-spacing:.3px">2.86</div>
<div class="t" style="left:780px;top:475px;width:36px;height:27px;line-height:27px;color:#008000">负</div>
<div class="t" style="left:817px;top:475px;width:36px;height:27px;line-height:27px;color:#008000">输</div>
<div class="t" style="left:854px;top:475px;width:54px;height:27px;line-height:27px;color:#ff0000">大</div>
<div class="a" style="left:0px;top:501px;width:909px;height:27px;background:#f0f0f0"></div>
<div class="a" style="left:0px;top:501px;width:52px;height:27px;background:#b5b500"></div>
<div class="a" style="left:454px;top:501px;width:44px;height:27px;background:#fefaf7"></div>
<div class="a" style="left:499px;top:501px;width:51px;height:27px;background:#fefaf7"></div>
<div class="a" style="left:551px;top:501px;width:47px;height:27px;background:#fefaf7"></div>
<div class="a" style="left:599px;top:501px;width:58px;height:27px;background:#f0f7fb"></div>
<div class="a" style="left:658px;top:501px;width:60px;height:27px;background:#f0f7fb"></div>
<div class="a" style="left:719px;top:501px;width:60px;height:27px;background:#f0f7fb"></div>
<div class="t" style="left:0px;top:503px;width:52px;height:27px;line-height:27px;color:#fff">巴西乙</div>
<div class="t" style="left:53px;top:502px;width:72px;height:27px;line-height:27px;color:#333;letter-spacing:.3px">25-08-17</div>
<div class="t" style="left:126px;top:503px;width:102px;height:27px;line-height:27px;"><span style="color:#008000">维拉诺瓦</span></div>
<div class="t" style="left:229px;top:502px;width:83px;height:27px;line-height:27px;color:#333;letter-spacing:.3px"><span style="color:#ff0000">2-0</span>(1-0)</div>
<div class="t" style="left:313px;top:502px;width:37px;height:27px;line-height:27px;color:#333;letter-spacing:.3px">1-2</div>
<div class="t" style="left:351px;top:503px;width:102px;height:27px;line-height:27px;"><span style="color:#000">戈伊亚斯</span></div>
<div class="t" style="left:454px;top:502px;width:44px;height:27px;line-height:27px;color:#333;letter-spacing:.3px">0.85</div>
<div class="t" style="left:499px;top:503px;width:51px;height:27px;line-height:27px;color:#333">平手</div>
<div class="t" style="left:551px;top:502px;width:47px;height:27px;line-height:27px;color:#333;letter-spacing:.3px">1.03</div>
<div class="t" style="left:599px;top:502px;width:58px;height:27px;line-height:27px;color:#333;letter-spacing:.3px">2.84</div>
<div class="t" style="left:658px;top:502px;width:60px;height:27px;line-height:27px;color:#333;letter-spacing:.3px">2.73</div>
<div class="t" style="left:719px;top:502px;width:60px;height:27px;line-height:27px;color:#333;letter-spacing:.3px">2.74</div>
<div class="t" style="left:780px;top:503px;width:36px;height:27px;line-height:27px;color:#ff0000">胜</div>
<div class="t" style="left:817px;top:503px;width:36px;height:27px;line-height:27px;color:#ff0000">赢</div>
<div class="t" style="left:854px;top:503px;width:54px;height:27px;line-height:27px;color:#ff0000">大</div>
<div class="a" style="left:0px;top:529px;width:909px;height:27px;background:#fff"></div>
<div class="a" style="left:0px;top:529px;width:52px;height:27px;background:#b5b500"></div>
<div class="a" style="left:454px;top:529px;width:44px;height:27px;background:#fefaf7"></div>
<div class="a" style="left:499px;top:529px;width:51px;height:27px;background:#fefaf7"></div>
<div class="a" style="left:551px;top:529px;width:47px;height:27px;background:#fefaf7"></div>
<div class="a" style="left:599px;top:529px;width:58px;height:27px;background:#f0f7fb"></div>
<div class="a" style="left:658px;top:529px;width:60px;height:27px;background:#f0f7fb"></div>
<div class="a" style="left:719px;top:529px;width:60px;height:27px;background:#f0f7fb"></div>
<div class="t" style="left:0px;top:531px;width:52px;height:27px;line-height:27px;color:#fff">巴西乙</div>
<div class="t" style="left:53px;top:530px;width:72px;height:27px;line-height:27px;color:#333;letter-spacing:.3px">25-08-12</div>
<div class="t" style="left:126px;top:531px;width:102px;height:27px;line-height:27px;"><span style="color:#000">帕桑度</span></div>
<div class="t" style="left:229px;top:530px;width:83px;height:27px;line-height:27px;color:#333;letter-spacing:.3px"><span style="color:#ff0000">0-1</span>(0-0)</div>
<div class="t" style="left:313px;top:530px;width:37px;height:27px;line-height:27px;color:#333;letter-spacing:.3px">9-5</div>
<div class="t" style="left:351px;top:531px;width:102px;height:27px;line-height:27px;"><span style="color:#008000">维拉诺瓦</span></div>
<div class="t" style="left:454px;top:530px;width:44px;height:27px;line-height:27px;color:#333;letter-spacing:.3px">0.84</div>
<div class="t" style="left:499px;top:530px;width:51px;height:27px;line-height:27px;color:#333">平<span class="sl">/</span>半</div>
<div class="t" style="left:551px;top:530px;width:47px;height:27px;line-height:27px;color:#333;letter-spacing:.3px">1.04</div>
<div class="t" style="left:599px;top:530px;width:58px;height:27px;line-height:27px;color:#333;letter-spacing:.3px">2.17</div>
<div class="t" style="left:658px;top:530px;width:60px;height:27px;line-height:27px;color:#333;letter-spacing:.3px">2.86</div>
<div class="t" style="left:719px;top:530px;width:60px;height:27px;line-height:27px;color:#333;letter-spacing:.3px">3.66</div>
<div class="t" style="left:780px;top:531px;width:36px;height:27px;line-height:27px;color:#ff0000">胜</div>
<div class="t" style="left:817px;top:531px;width:36px;height:27px;line-height:27px;color:#ff0000">赢</div>
<div class="t" style="left:854px;top:531px;width:54px;height:27px;line-height:27px;color:#008000">小</div>
<div class="a" style="left:0px;top:557px;width:909px;height:27px;background:#f0f0f0"></div>
<div class="a" style="left:0px;top:557px;width:52px;height:27px;background:#b5b500"></div>
<div class="a" style="left:454px;top:557px;width:44px;height:27px;background:#fefaf7"></div>
<div class="a" style="left:499px;top:557px;width:51px;height:27px;background:#fefaf7"></div>
<div class="a" style="left:551px;top:557px;width:47px;height:27px;background:#fefaf7"></div>
<div class="a" style="left:599px;top:557px;width:58px;height:27px;background:#f0f7fb"></div>
<div class="a" style="left:658px;top:557px;width:60px;height:27px;background:#f0f7fb"></div>
<div class="a" style="left:719px;top:557px;width:60px;height:27px;background:#f0f7fb"></div>
<div class="t" style="left:0px;top:559px;width:52px;height:27px;line-height:27px;color:#fff">巴西乙</div>
<div class="t" style="left:53px;top:558px;width:72px;height:27px;line-height:27px;color:#333;letter-spacing:.3px">25-08-01</div>
<div class="t" style="left:126px;top:559px;width:102px;height:27px;line-height:27px;"><span style="color:#008000">维拉诺瓦</span></div>
<div class="t" style="left:229px;top:558px;width:83px;height:27px;line-height:27px;color:#333;letter-spacing:.3px"><span style="color:#ff0000">1-2</span>(1-2)</div>
<div class="t" style="left:313px;top:558px;width:37px;height:27px;line-height:27px;color:#333;letter-spacing:.3px">3-3</div>
<div class="t" style="left:351px;top:559px;width:102px;height:27px;line-height:27px;"><span style="color:#000">料里蒂巴</span><b class="bd">1</b></div>
<div class="t" style="left:454px;top:558px;width:44px;height:27px;line-height:27px;color:#333;letter-spacing:.3px">0.82</div>
<div class="t" style="left:499px;top:559px;width:51px;height:27px;line-height:27px;color:#333">平手</div>
<div class="t" style="left:551px;top:558px;width:47px;height:27px;line-height:27px;color:#333;letter-spacing:.3px">1.06</div>
<div class="t" style="left:599px;top:558px;width:58px;height:27px;line-height:27px;color:#333;letter-spacing:.3px">2.59</div>
<div class="t" style="left:658px;top:558px;width:60px;height:27px;line-height:27px;color:#333;letter-spacing:.3px">2.68</div>
<div class="t" style="left:719px;top:558px;width:60px;height:27px;line-height:27px;color:#333;letter-spacing:.3px">3.07</div>
<div class="t" style="left:780px;top:559px;width:36px;height:27px;line-height:27px;color:#008000">负</div>
<div class="t" style="left:817px;top:559px;width:36px;height:27px;line-height:27px;color:#008000">输</div>
<div class="t" style="left:854px;top:559px;width:54px;height:27px;line-height:27px;color:#ff0000">大</div>
<div class="a" style="left:0px;top:585px;width:909px;height:27px;background:#fff"></div>
<div class="a" style="left:0px;top:585px;width:52px;height:27px;background:#b5b500"></div>
<div class="a" style="left:454px;top:585px;width:44px;height:27px;background:#fefaf7"></div>
<div class="a" style="left:499px;top:585px;width:51px;height:27px;background:#fefaf7"></div>
<div class="a" style="left:551px;top:585px;width:47px;height:27px;background:#fefaf7"></div>
<div class="a" style="left:599px;top:585px;width:58px;height:27px;background:#f0f7fb"></div>
<div class="a" style="left:658px;top:585px;width:60px;height:27px;background:#f0f7fb"></div>
<div class="a" style="left:719px;top:585px;width:60px;height:27px;background:#f0f7fb"></div>
<div class="t" style="left:0px;top:587px;width:52px;height:27px;line-height:27px;color:#fff">巴西乙</div>
<div class="t" style="left:53px;top:586px;width:72px;height:27px;line-height:27px;color:#333;letter-spacing:.3px">25-07-28</div>
<div class="t" style="left:126px;top:587px;width:102px;height:27px;line-height:27px;"><span style="color:#000">沃尔特雷东达</span></div>
<div class="t" style="left:229px;top:586px;width:83px;height:27px;line-height:27px;color:#333;letter-spacing:.3px"><span style="color:#ff0000">2-1</span>(1-0)</div>
<div class="t" style="left:313px;top:586px;width:37px;height:27px;line-height:27px;color:#333;letter-spacing:.3px">4-6</div>
<div class="t" style="left:351px;top:587px;width:102px;height:27px;line-height:27px;"><span style="color:#008000">维拉诺瓦</span></div>
<div class="t" style="left:454px;top:586px;width:44px;height:27px;line-height:27px;color:#333;letter-spacing:.3px">0.80</div>
<div class="t" style="left:499px;top:586px;width:51px;height:27px;line-height:27px;color:#333">平<span class="sl">/</span>半</div>
<div class="t" style="left:551px;top:586px;width:47px;height:27px;line-height:27px;color:#333;letter-spacing:.3px">1.08</div>
<div class="t" style="left:599px;top:586px;width:58px;height:27px;line-height:27px;color:#333;letter-spacing:.3px">2.08</div>
<div class="t" style="left:658px;top:586px;width:60px;height:27px;line-height:27px;color:#333;letter-spacing:.3px">2.99</div>
<div class="t" style="left:719px;top:586px;width:60px;height:27px;line-height:27px;color:#333;letter-spacing:.3px">3.71</div>
<div class="t" style="left:780px;top:587px;width:36px;height:27px;line-height:27px;color:#008000">负</div>
<div class="t" style="left:817px;top:587px;width:36px;height:27px;line-height:27px;color:#008000">输</div>
<div class="t" style="left:854px;top:587px;width:54px;height:27px;line-height:27px;color:#ff0000">大</div>
<div class="a" style="left:0px;top:613px;width:909px;height:27px;background:#f0f0f0"></div>
<div class="a" style="left:0px;top:613px;width:52px;height:27px;background:#b5b500"></div>
<div class="a" style="left:454px;top:613px;width:44px;height:27px;background:#fefaf7"></div>
<div class="a" style="left:499px;top:613px;width:51px;height:27px;background:#fefaf7"></div>
<div class="a" style="left:551px;top:613px;width:47px;height:27px;background:#fefaf7"></div>
<div class="a" style="left:599px;top:613px;width:58px;height:27px;background:#f0f7fb"></div>
<div class="a" style="left:658px;top:613px;width:60px;height:27px;background:#f0f7fb"></div>
<div class="a" style="left:719px;top:613px;width:60px;height:27px;background:#f0f7fb"></div>
<div class="t" style="left:0px;top:615px;width:52px;height:27px;line-height:27px;color:#fff">巴西乙</div>
<div class="t" style="left:53px;top:614px;width:72px;height:27px;line-height:27px;color:#333;letter-spacing:.3px">25-07-23</div>
<div class="t" style="left:126px;top:615px;width:102px;height:27px;line-height:27px;"><span style="color:#008000">维拉诺瓦</span></div>
<div class="t" style="left:229px;top:614px;width:83px;height:27px;line-height:27px;color:#333;letter-spacing:.3px"><span style="color:#ff0000">2-0</span>(1-0)</div>
<div class="t" style="left:313px;top:614px;width:37px;height:27px;line-height:27px;color:#333;letter-spacing:.3px">5-7</div>
<div class="t" style="left:351px;top:615px;width:102px;height:27px;line-height:27px;"><span style="color:#000"><span style="font-size:11px;letter-spacing:-0.5px">CRB</span>马瑟欧</span></div>
<div class="t" style="left:454px;top:614px;width:44px;height:27px;line-height:27px;color:#333;letter-spacing:.3px">1.02</div>
<div class="t" style="left:499px;top:614px;width:51px;height:27px;line-height:27px;color:#333">平<span class="sl">/</span>半</div>
<div class="t" style="left:551px;top:614px;width:47px;height:27px;line-height:27px;color:#333;letter-spacing:.3px">0.86</div>
<div class="t" style="left:599px;top:614px;width:58px;height:27px;line-height:27px;color:#333;letter-spacing:.3px">2.23</div>
<div class="t" style="left:658px;top:614px;width:60px;height:27px;line-height:27px;color:#333;letter-spacing:.3px">2.97</div>
<div class="t" style="left:719px;top:614px;width:60px;height:27px;line-height:27px;color:#333;letter-spacing:.3px">3.37</div>
<div class="t" style="left:780px;top:615px;width:36px;height:27px;line-height:27px;color:#ff0000">胜</div>
<div class="t" style="left:817px;top:615px;width:36px;height:27px;line-height:27px;color:#ff0000">赢</div>
<div class="t" style="left:854px;top:615px;width:54px;height:27px;line-height:27px;color:#0000ff">走</div>
<div class="a" style="left:0px;top:641px;width:909px;height:27px;background:#fff"></div>
<div class="a" style="left:0px;top:641px;width:52px;height:27px;background:#b5b500"></div>
<div class="a" style="left:454px;top:641px;width:44px;height:27px;background:#fefaf7"></div>
<div class="a" style="left:499px;top:641px;width:51px;height:27px;background:#fefaf7"></div>
<div class="a" style="left:551px;top:641px;width:47px;height:27px;background:#fefaf7"></div>
<div class="a" style="left:599px;top:641px;width:58px;height:27px;background:#f0f7fb"></div>
<div class="a" style="left:658px;top:641px;width:60px;height:27px;background:#f0f7fb"></div>
<div class="a" style="left:719px;top:641px;width:60px;height:27px;background:#f0f7fb"></div>
<div class="t" style="left:0px;top:643px;width:52px;height:27px;line-height:27px;color:#fff">巴西乙</div>
<div class="t" style="left:53px;top:642px;width:72px;height:27px;line-height:27px;color:#333;letter-spacing:.3px">25-07-20</div>
<div class="t" style="left:126px;top:643px;width:102px;height:27px;line-height:27px;"><span style="color:#000">奥瓦</span></div>
<div class="t" style="left:229px;top:642px;width:83px;height:27px;line-height:27px;color:#333;letter-spacing:.3px"><span style="color:#ff0000">1-1</span>(0-0)</div>
<div class="t" style="left:313px;top:642px;width:37px;height:27px;line-height:27px;color:#333;letter-spacing:.3px">10-6</div>
<div class="t" style="left:351px;top:643px;width:102px;height:27px;line-height:27px;"><span style="color:#008000">维拉诺瓦</span></div>
<div class="t" style="left:454px;top:642px;width:44px;height:27px;line-height:27px;color:#333;letter-spacing:.3px">0.83</div>
<div class="t" style="left:499px;top:642px;width:51px;height:27px;line-height:27px;color:#333">平<span class="sl">/</span>半</div>
<div class="t" style="left:551px;top:642px;width:47px;height:27px;line-height:27px;color:#333;letter-spacing:.3px">1.05</div>
<div class="t" style="left:599px;top:642px;width:58px;height:27px;line-height:27px;color:#333;letter-spacing:.3px">2.21</div>
<div class="t" style="left:658px;top:642px;width:60px;height:27px;line-height:27px;color:#333;letter-spacing:.3px">2.82</div>
<div class="t" style="left:719px;top:642px;width:60px;height:27px;line-height:27px;color:#333;letter-spacing:.3px">3.63</div>
<div class="t" style="left:780px;top:643px;width:36px;height:27px;line-height:27px;color:#0000ff">平</div>
<div class="t" style="left:817px;top:643px;width:36px;height:27px;line-height:27px;color:#ff0000">赢</div>
<div class="t" style="left:854px;top:643px;width:54px;height:27px;line-height:27px;color:#ff0000">大</div>
<div class="a" style="left:0px;top:669px;width:909px;height:27px;background:#f0f0f0"></div>
<div class="a" style="left:0px;top:669px;width:52px;height:27px;background:#b5b500"></div>
<div class="a" style="left:454px;top:669px;width:44px;height:27px;background:#fefaf7"></div>
<div class="a" style="left:499px;top:669px;width:51px;height:27px;background:#fefaf7"></div>
<div class="a" style="left:551px;top:669px;width:47px;height:27px;background:#fefaf7"></div>
<div class="a" style="left:599px;top:669px;width:58px;height:27px;background:#f0f7fb"></div>
<div class="a" style="left:658px;top:669px;width:60px;height:27px;background:#f0f7fb"></div>
<div class="a" style="left:719px;top:669px;width:60px;height:27px;background:#f0f7fb"></div>
<div class="t" style="left:0px;top:671px;width:52px;height:27px;line-height:27px;color:#fff">巴西乙</div>
<div class="t" style="left:53px;top:670px;width:72px;height:27px;line-height:27px;color:#333;letter-spacing:.3px">25-07-12</div>
<div class="t" style="left:126px;top:671px;width:102px;height:27px;line-height:27px;"><span style="color:#008000">维拉诺瓦</span></div>
<div class="t" style="left:229px;top:670px;width:83px;height:27px;line-height:27px;color:#333;letter-spacing:.3px"><span style="color:#ff0000">0-0</span>(0-0)</div>
<div class="t" style="left:313px;top:670px;width:37px;height:27px;line-height:27px;color:#333;letter-spacing:.3px">5-0</div>
<div class="t" style="left:351px;top:671px;width:102px;height:27px;line-height:27px;"><span style="color:#000">欧帕尔利奥</span></div>
<div class="t" style="left:454px;top:670px;width:44px;height:27px;line-height:27px;color:#333;letter-spacing:.3px">0.97</div>
<div class="t" style="left:499px;top:671px;width:51px;height:27px;line-height:27px;color:#333">半球</div>
<div class="t" style="left:551px;top:670px;width:47px;height:27px;line-height:27px;color:#333;letter-spacing:.3px">0.91</div>
<div class="t" style="left:599px;top:670px;width:58px;height:27px;line-height:27px;color:#333;letter-spacing:.3px">1.91</div>
<div class="t" style="left:658px;top:670px;width:60px;height:27px;line-height:27px;color:#333;letter-spacing:.3px">3.01</div>
<div class="t" style="left:719px;top:670px;width:60px;height:27px;line-height:27px;color:#333;letter-spacing:.3px">4.38</div>
<div class="t" style="left:780px;top:671px;width:36px;height:27px;line-height:27px;color:#0000ff">平</div>
<div class="t" style="left:817px;top:671px;width:36px;height:27px;line-height:27px;color:#008000">输</div>
<div class="t" style="left:854px;top:671px;width:54px;height:27px;line-height:27px;color:#008000">小</div>
<div class="a" style="left:0px;top:697px;width:909px;height:27px;background:#fff"></div>
<div class="a" style="left:0px;top:697px;width:52px;height:27px;background:#b5b500"></div>
<div class="a" style="left:454px;top:697px;width:44px;height:27px;background:#fefaf7"></div>
<div class="a" style="left:499px;top:697px;width:51px;height:27px;background:#fefaf7"></div>
<div class="a" style="left:551px;top:697px;width:47px;height:27px;background:#fefaf7"></div>
<div class="a" style="left:599px;top:697px;width:58px;height:27px;background:#f0f7fb"></div>
<div class="a" style="left:658px;top:697px;width:60px;height:27px;background:#f0f7fb"></div>
<div class="a" style="left:719px;top:697px;width:60px;height:27px;background:#f0f7fb"></div>
<div class="t" style="left:0px;top:699px;width:52px;height:27px;line-height:27px;color:#fff">巴西乙</div>
<div class="t" style="left:53px;top:698px;width:72px;height:27px;line-height:27px;color:#333;letter-spacing:.3px">25-07-07</div>
<div class="t" style="left:126px;top:699px;width:102px;height:27px;line-height:27px;"><span style="color:#000">费罗维亚里亚</span></div>
<div class="t" style="left:229px;top:698px;width:83px;height:27px;line-height:27px;color:#333;letter-spacing:.3px"><span style="color:#ff0000">1-3</span>(1-1)</div>
<div class="t" style="left:313px;top:698px;width:37px;height:27px;line-height:27px;color:#333;letter-spacing:.3px">7-8</div>
<div class="t" style="left:351px;top:699px;width:102px;height:27px;line-height:27px;"><span style="color:#008000">维拉诺瓦</span></div>
<div class="t" style="left:454px;top:698px;width:44px;height:27px;line-height:27px;color:#333;letter-spacing:.3px">1.02</div>
<div class="t" style="left:499px;top:698px;width:51px;height:27px;line-height:27px;color:#333">平<span class="sl">/</span>半</div>
<div class="t" style="left:551px;top:698px;width:47px;height:27px;line-height:27px;color:#333;letter-spacing:.3px">0.86</div>
<div class="t" style="left:599px;top:698px;width:58px;height:27px;line-height:27px;color:#333;letter-spacing:.3px">2.26</div>
<div class="t" style="left:658px;top:698px;width:60px;height:27px;line-height:27px;color:#333;letter-spacing:.3px">2.80</div>
<div class="t" style="left:719px;top:698px;width:60px;height:27px;line-height:27px;color:#333;letter-spacing:.3px">3.52</div>
<div class="t" style="left:780px;top:699px;width:36px;height:27px;line-height:27px;color:#ff0000">胜</div>
<div class="t" style="left:817px;top:699px;width:36px;height:27px;line-height:27px;color:#ff0000">赢</div>
<div class="t" style="left:854px;top:699px;width:54px;height:27px;line-height:27px;color:#ff0000">大</div>
<div class="a" style="left:0px;top:725px;width:909px;height:27px;background:#f0f0f0"></div>
<div class="a" style="left:0px;top:725px;width:52px;height:27px;background:#b5b500"></div>
<div class="a" style="left:454px;top:725px;width:44px;height:27px;background:#fefaf7"></div>
<div class="a" style="left:499px;top:725px;width:51px;height:27px;background:#fefaf7"></div>
<div class="a" style="left:551px;top:725px;width:47px;height:27px;background:#fefaf7"></div>
<div class="a" style="left:599px;top:725px;width:58px;height:27px;background:#f0f7fb"></div>
<div class="a" style="left:658px;top:725px;width:60px;height:27px;background:#f0f7fb"></div>
<div class="a" style="left:719px;top:725px;width:60px;height:27px;background:#f0f7fb"></div>
<div class="t" style="left:0px;top:727px;width:52px;height:27px;line-height:27px;color:#fff">巴西乙</div>
<div class="t" style="left:53px;top:726px;width:72px;height:27px;line-height:27px;color:#333;letter-spacing:.3px">25-06-29</div>
<div class="t" style="left:126px;top:727px;width:102px;height:27px;line-height:27px;"><span style="color:#008000">维拉诺瓦</span></div>
<div class="t" style="left:229px;top:726px;width:83px;height:27px;line-height:27px;color:#333;letter-spacing:.3px"><span style="color:#ff0000">1-0</span>(0-0)</div>
<div class="t" style="left:313px;top:726px;width:37px;height:27px;line-height:27px;color:#333;letter-spacing:.3px">5-6</div>
<div class="t" style="left:351px;top:727px;width:102px;height:27px;line-height:27px;"><span style="color:#000">戈亚尼亚竞技</span></div>
<div class="t" style="left:454px;top:726px;width:44px;height:27px;line-height:27px;color:#333;letter-spacing:.3px">0.77</div>
<div class="t" style="left:499px;top:727px;width:51px;height:27px;line-height:27px;color:#333">平手</div>
<div class="t" style="left:551px;top:726px;width:47px;height:27px;line-height:27px;color:#333;letter-spacing:.3px">1.12</div>
<div class="t" style="left:599px;top:726px;width:58px;height:27px;line-height:27px;color:#333;letter-spacing:.3px">2.43</div>
<div class="t" style="left:658px;top:726px;width:60px;height:27px;line-height:27px;color:#333;letter-spacing:.3px">2.80</div>
<div class="t" style="left:719px;top:726px;width:60px;height:27px;line-height:27px;color:#333;letter-spacing:.3px">3.20</div>
<div class="t" style="left:780px;top:727px;width:36px;height:27px;line-height:27px;color:#ff0000">胜</div>
<div class="t" style="left:817px;top:727px;width:36px;height:27px;line-height:27px;color:#ff0000">赢</div>
<div class="t" style="left:854px;top:727px;width:54px;height:27px;line-height:27px;color:#008000">小</div>
<div class="a" style="left:0px;top:431px;width:909px;height:1px;background:#bfbfbf"></div>
<div class="a" style="left:453px;top:454px;width:456px;height:1px;background:#bfbfbf"></div>
<div class="a" style="left:0px;top:472px;width:909px;height:1px;background:#bfbfbf"></div>
<div class="a" style="left:0px;top:500px;width:909px;height:1px;background:#bfbfbf"></div>
<div class="a" style="left:0px;top:528px;width:909px;height:1px;background:#bfbfbf"></div>
<div class="a" style="left:0px;top:556px;width:909px;height:1px;background:#bfbfbf"></div>
<div class="a" style="left:0px;top:584px;width:909px;height:1px;background:#bfbfbf"></div>
<div class="a" style="left:0px;top:612px;width:909px;height:1px;background:#bfbfbf"></div>
<div class="a" style="left:0px;top:640px;width:909px;height:1px;background:#bfbfbf"></div>
<div class="a" style="left:0px;top:668px;width:909px;height:1px;background:#bfbfbf"></div>
<div class="a" style="left:0px;top:696px;width:909px;height:1px;background:#bfbfbf"></div>
<div class="a" style="left:0px;top:724px;width:909px;height:1px;background:#bfbfbf"></div>
<div class="a" style="left:0px;top:752px;width:909px;height:1px;background:#bfbfbf"></div>
<div class="a" style="left:52px;top:432px;width:1px;height:320px;background:#bfbfbf"></div>
<div class="a" style="left:125px;top:432px;width:1px;height:320px;background:#bfbfbf"></div>
<div class="a" style="left:228px;top:432px;width:1px;height:320px;background:#bfbfbf"></div>
<div class="a" style="left:312px;top:432px;width:1px;height:320px;background:#bfbfbf"></div>
<div class="a" style="left:350px;top:432px;width:1px;height:320px;background:#bfbfbf"></div>
<div class="a" style="left:453px;top:432px;width:1px;height:320px;background:#bfbfbf"></div>
<div class="a" style="left:498px;top:455px;width:1px;height:297px;background:#bfbfbf"></div>
<div class="a" style="left:550px;top:455px;width:1px;height:297px;background:#bfbfbf"></div>
<div class="a" style="left:598px;top:432px;width:1px;height:320px;background:#bfbfbf"></div>
<div class="a" style="left:657px;top:455px;width:1px;height:297px;background:#bfbfbf"></div>
<div class="a" style="left:718px;top:455px;width:1px;height:297px;background:#bfbfbf"></div>
<div class="a" style="left:779px;top:432px;width:1px;height:320px;background:#bfbfbf"></div>
<div class="a" style="left:816px;top:455px;width:1px;height:297px;background:#bfbfbf"></div>
<div class="a" style="left:853px;top:455px;width:1px;height:297px;background:#bfbfbf"></div>
<div class="a" style="left:908px;top:432px;width:1px;height:320px;background:#bfbfbf"></div>
<div class="a" style="left:908px;top:377px;width:1px;height:28px;background:#bfbfbf"></div>
<div class="a" style="left:908px;top:752px;width:1px;height:3px;background:#bfbfbf"></div>
<div class="s" style="left:0;top:380px;width:909px;height:27px;line-height:27px;text-align:center;color:#333;letter-spacing:0.43px">近<span style="color:#f00">10</span>场,胜6平3负1, 胜率:<span style="color:#00f">60%</span> 赢率:<span class="red80">80%</span> 大:<span style="color:#00f">50%</span> 单率:<span style="color:#00f">40%</span></div>
<div class="s" style="left:383px;top:8px;font-weight:bold;font-size:14px;color:#fff;line-height:16px">近期战绩</div>
<div class="rad" style="left:439px;top:8px"></div>
<div class="s" style="left:456px;top:11px;color:#fff;line-height:14px">竖版</div>
<div class="rad on" style="left:484px;top:8px"></div>
<div class="s" style="left:501px;top:11px;color:#fff;line-height:14px">横版</div>
</body></html>
